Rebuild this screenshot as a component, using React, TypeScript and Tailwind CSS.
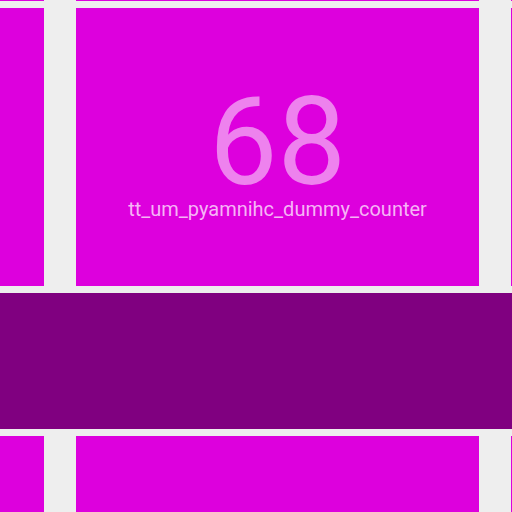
import React from "react";

const Tile = ({ children }: { children?: React.ReactNode }) => (
  <div className="w-[403px] h-[278px] shrink-0 bg-[#dd00dd]">{children}</div>
);

const Row = ({ center }: { center?: React.ReactNode }) => (
  <div className="flex gap-[32px] ml-[-359px]">
    <Tile />
    <Tile>{center}</Tile>
    <Tile />
  </div>
);

export default function App() {
  return (
    <div
      className="w-[512px] h-[512px] overflow-hidden bg-[#eeeeee]"
      style={{ fontFamily: "Roboto, 'Noto Sans', sans-serif" }}
    >
      <div className="flex flex-col gap-[7px] mt-[-277.5px]">
        <Row />
        <Row
          center={
            <div className="flex flex-col items-center pt-[80px]">
              <div className="text-[122px] leading-[110px] text-[#ee82ee]">68</div>
              <div className="text-[20px] leading-[20px] mt-[1px] text-[#f6b4f6]">
                tt_um_pyamnihc_dummy_counter
              </div>
            </div>
          }
        />
        <div className="h-[136px] bg-[#800080]" />
        <Row />
      </div>
    </div>
  );
}
